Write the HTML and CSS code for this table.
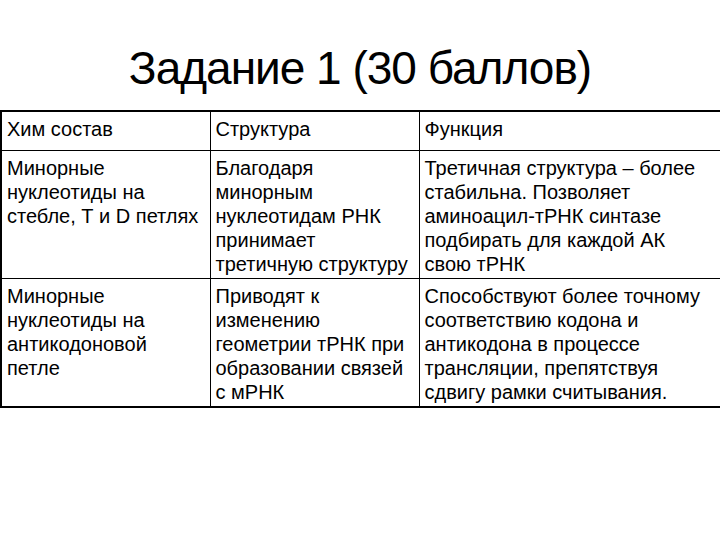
FILE: index.html
```html
<!DOCTYPE html>
<html lang="ru">
<head>
<meta charset="utf-8">
<link rel="stylesheet" href="styles.css">
</head>
<body>
<h1 class="title">Задание 1 (30 баллов)</h1>
<table class="grid">
  <colgroup>
    <col class="c1"><col class="c2"><col class="c3">
  </colgroup>
  <tr class="head">
    <td>Хим состав</td>
    <td>Структура</td>
    <td>Функция</td>
  </tr>
  <tr class="row">
    <td>Минорные<br>нуклеотиды на<br>стебле, Т и D петлях</td>
    <td>Благодаря<br>минорным<br>нуклеотидам РНК<br>принимает<br>третичную структуру</td>
    <td>Третичная структура – более<br>стабильна. Позволяет<br>аминоацил-тРНК синтазе<br>подбирать для каждой АК<br>свою тРНК</td>
  </tr>
  <tr class="row">
    <td>Минорные<br>нуклеотиды на<br>антикодоновой<br>петле</td>
    <td>Приводят к<br>изменению<br>геометрии тРНК при<br>образовании связей<br>с мРНК</td>
    <td>Способствуют более точному<br>соответствию кодона и<br>антикодона в процессе<br>трансляции, препятствуя<br>сдвигу рамки считывания.</td>
  </tr>
</table>
</body>
</html>
```
FILE: styles.css
```css
html, body {
  margin: 0;
  padding: 0;
  background: #ffffff;
}
body {
  width: 720px;
  height: 540px;
  font-family: "Liberation Sans", Arial, sans-serif;
  color: #000000;
}
.title {
  margin: 0;
  padding-top: 38px;
  box-sizing: border-box;
  height: 110px;
  text-align: center;
  font-weight: normal;
  font-size: 46px;
  line-height: 60px;
  letter-spacing: -1px;
}
.grid {
  border-collapse: collapse;
  table-layout: fixed;
  width: 720px;
  border: 2px solid #000;
  font-size: 20px;
  line-height: 24px;
}
.c1 { width: 209px; }
.c2 { width: 209px; }
.c3 { width: 302px; }
.grid td {
  border: 1px solid #000;
  vertical-align: top;
  padding: 5px 4px 2px 5px;
  white-space: nowrap;
}
.head td {
  height: 31px;
  padding-top: 5px;
}
```
